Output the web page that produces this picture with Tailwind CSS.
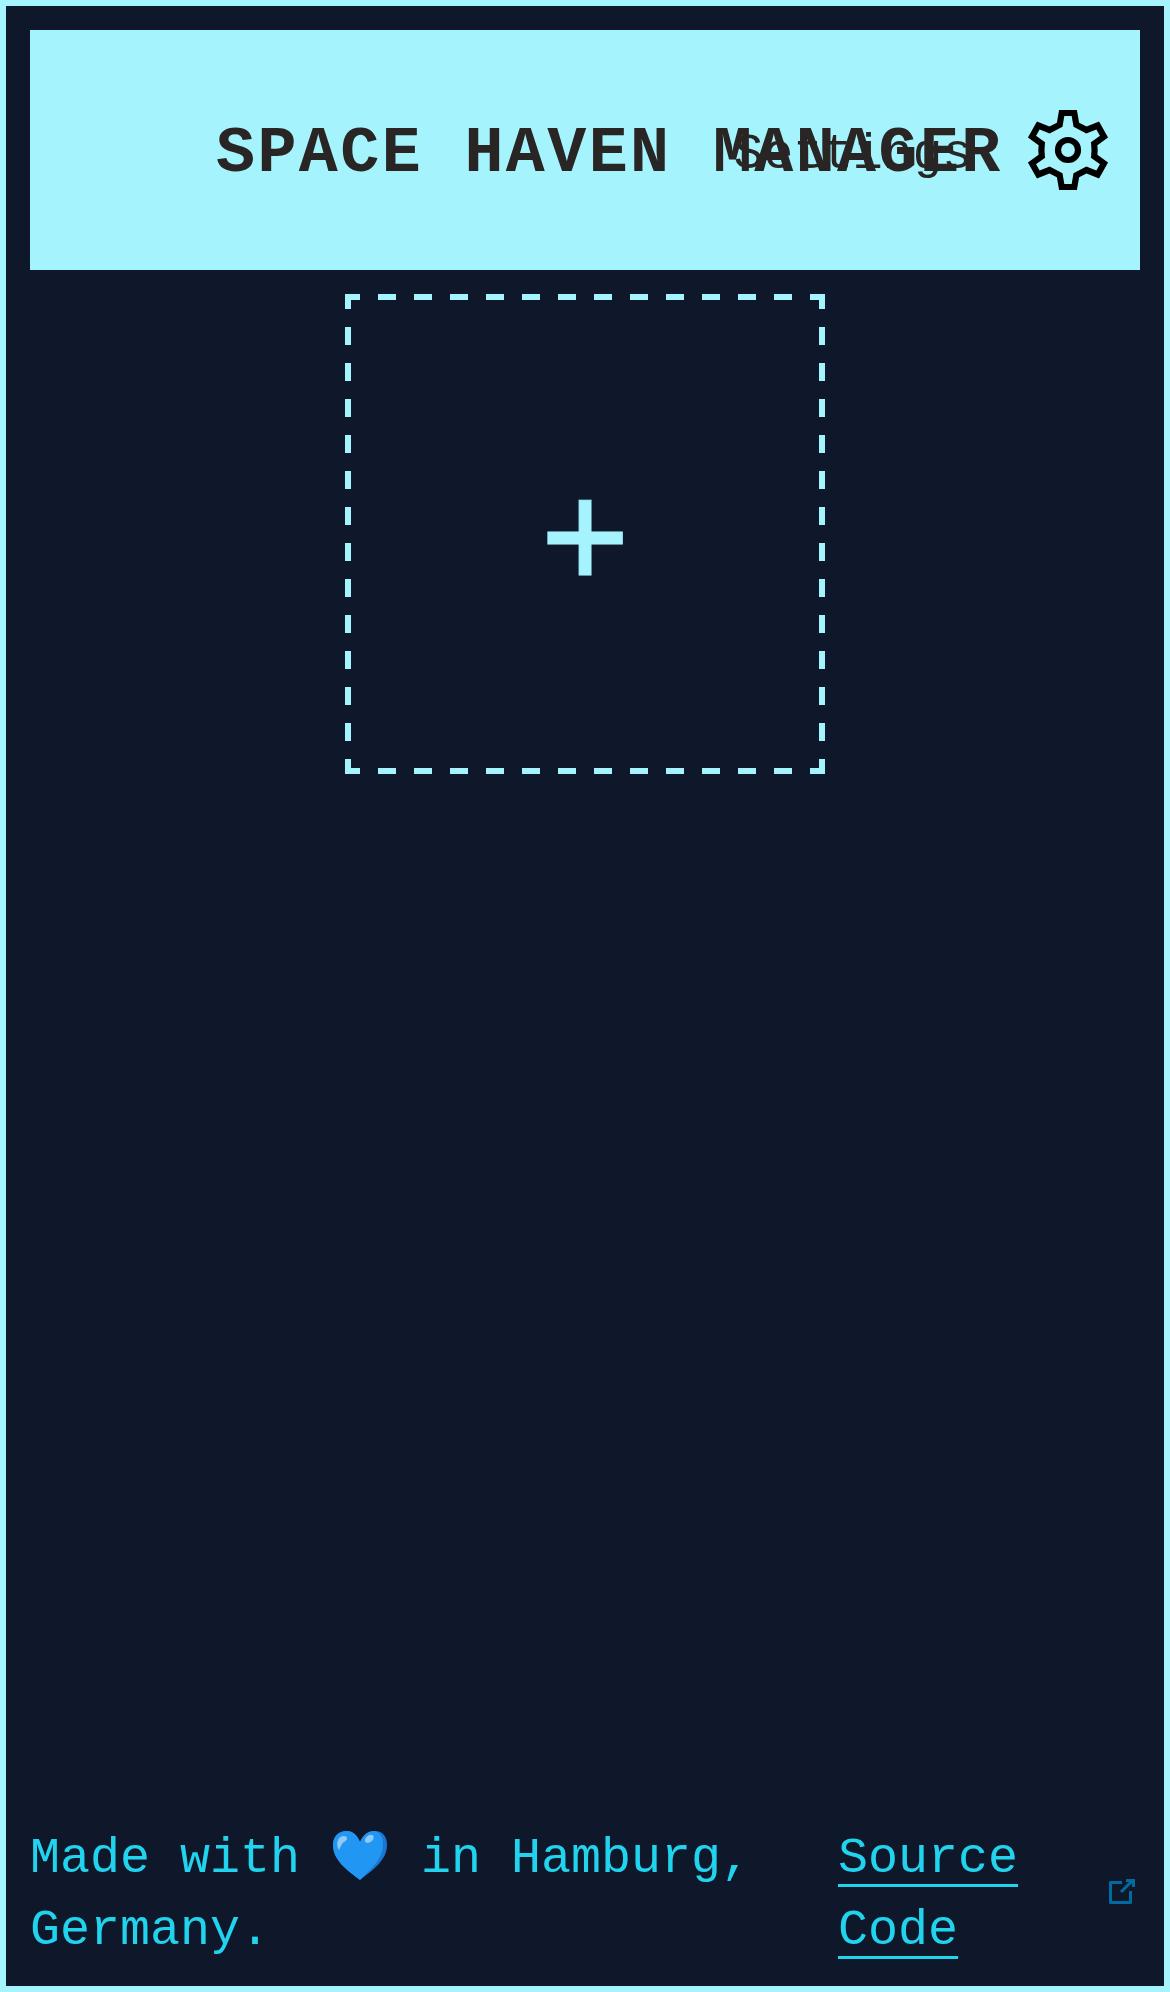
<!DOCTYPE html>
<html lang="en">
<head>
<meta charset="utf-8">
<title>Space Haven Manager</title>
<script src="https://cdn.jsdelivr.net/npm/@tailwindcss/browser@4"></script>
</head>
<body class="bg-[#0f172a] font-['Liberation_Mono',monospace]">
<div class="flex h-[1992px] w-[1170px] flex-col border-[6px] border-[#a5f3fc] p-6">
  <header class="relative flex h-60 shrink-0 items-center bg-[#a5f3fc] pl-[186px] text-[#292524]">
    <h1 class="translate-y-1 whitespace-nowrap text-[65px] leading-[72px] font-bold tracking-[2.4px]">SPACE HAVEN MANAGER</h1>
    <!-- settings link lies over the end of the title -->
    <a class="absolute top-[72px] right-6 flex h-24 items-center">
      <span class="mr-[48px] translate-y-[5px] text-[50px] leading-[72px] tracking-[-0.2px]">Settings</span>
      <svg class="size-24" viewBox="-48 -48 96 96" fill="none" stroke="#000" stroke-width="6.2">
        <path d="M-6.3-37H6.3L8.3-25.3L18.500-20L29.700-24.500L36-13.300L26.200-6.200Q27 0 26.200 6.200L36 13.300L29.700 24.500L18.500 20L8.300 25.300L6.300 37H-6.300L-8.300 25.300L-18.500 20L-29.700 24.500L-36 13.300L-26.200 6.200Q-27 0-26.200-6.200L-36-13.300L-29.700-24.500L-18.500-20L-8.300-25.300Z"/>
        <circle r="10"/>
      </svg>
    </a>
  </header>
  <main class="flex grow justify-center pt-6">
    <button class="relative flex size-[480px] items-center justify-center text-[#a5f3fc]">
      <svg class="absolute inset-0 size-full" viewBox="0 0 480 480" fill="none" stroke="currentColor" stroke-width="6" stroke-dasharray="18 18" stroke-dashoffset="3">
        <path d="M0 3H480"/><path d="M0 477H480"/><path d="M3 0V480"/><path d="M477 0V480"/>
      </svg>
      <span class="-translate-y-px font-['DejaVu_Sans_Mono',monospace] text-[144px] leading-none [-webkit-text-stroke:1px_#a5f3fc]">+</span>
    </button>
  </main>
  <footer class="flex h-36 shrink-0 items-center text-[50px] leading-[72px] text-[#22d3ee]">
    <p class="w-[808px] translate-y-[5px]">Made with <svg class="inline-block h-[50px] w-[61px] align-[-9px]" viewBox="0 0 61 50">
        <path fill="#1976d2" d="M30 11C34 3 40 0 45 0C53 0 57 6 57 14C57 29 43 39 30 49C17 39 3 29 3 14C3 6 8 0 17 0C23 0 27 4 30 11Z"/>
        <path fill="#2196f3" d="M30 11C33 3 39 0 44 0C50 1 53 5 53 13C53 28 42 37 30 49C17 39 3 29 3 14C3 6 8 0 17 0C23 0 27 4 30 11Z"/>
        <g fill="#90caf9"><path d="M9 19C5 13 8 5 14 5C18 5 18 9 14 11C11 13 11 16 9 19Z"/><ellipse cx="39.300" cy="7.800" rx="5" ry="3.300" transform="rotate(-38 39.3 7.8)"/></g>
      </svg> in Hamburg,<br>Germany.</p>
    <a class="flex grow items-center justify-between pr-[5px]">
      <span class="w-[180px] translate-y-[5px] underline decoration-[3px] underline-offset-[12px] [text-decoration-skip-ink:none]">Source Code</span>
      <svg class="mt-1 h-[26px] w-[26px]" viewBox="0 0 26 26" fill="none" stroke="#0369a1" stroke-width="3">
        <path stroke-linejoin="round" d="M13 3.500H1.500V23.500H21.500V12"/><path d="M12 13L23 2M17 1.500H24.500V8"/>
      </svg>
    </a>
  </footer>
</div>
</body>
</html>
